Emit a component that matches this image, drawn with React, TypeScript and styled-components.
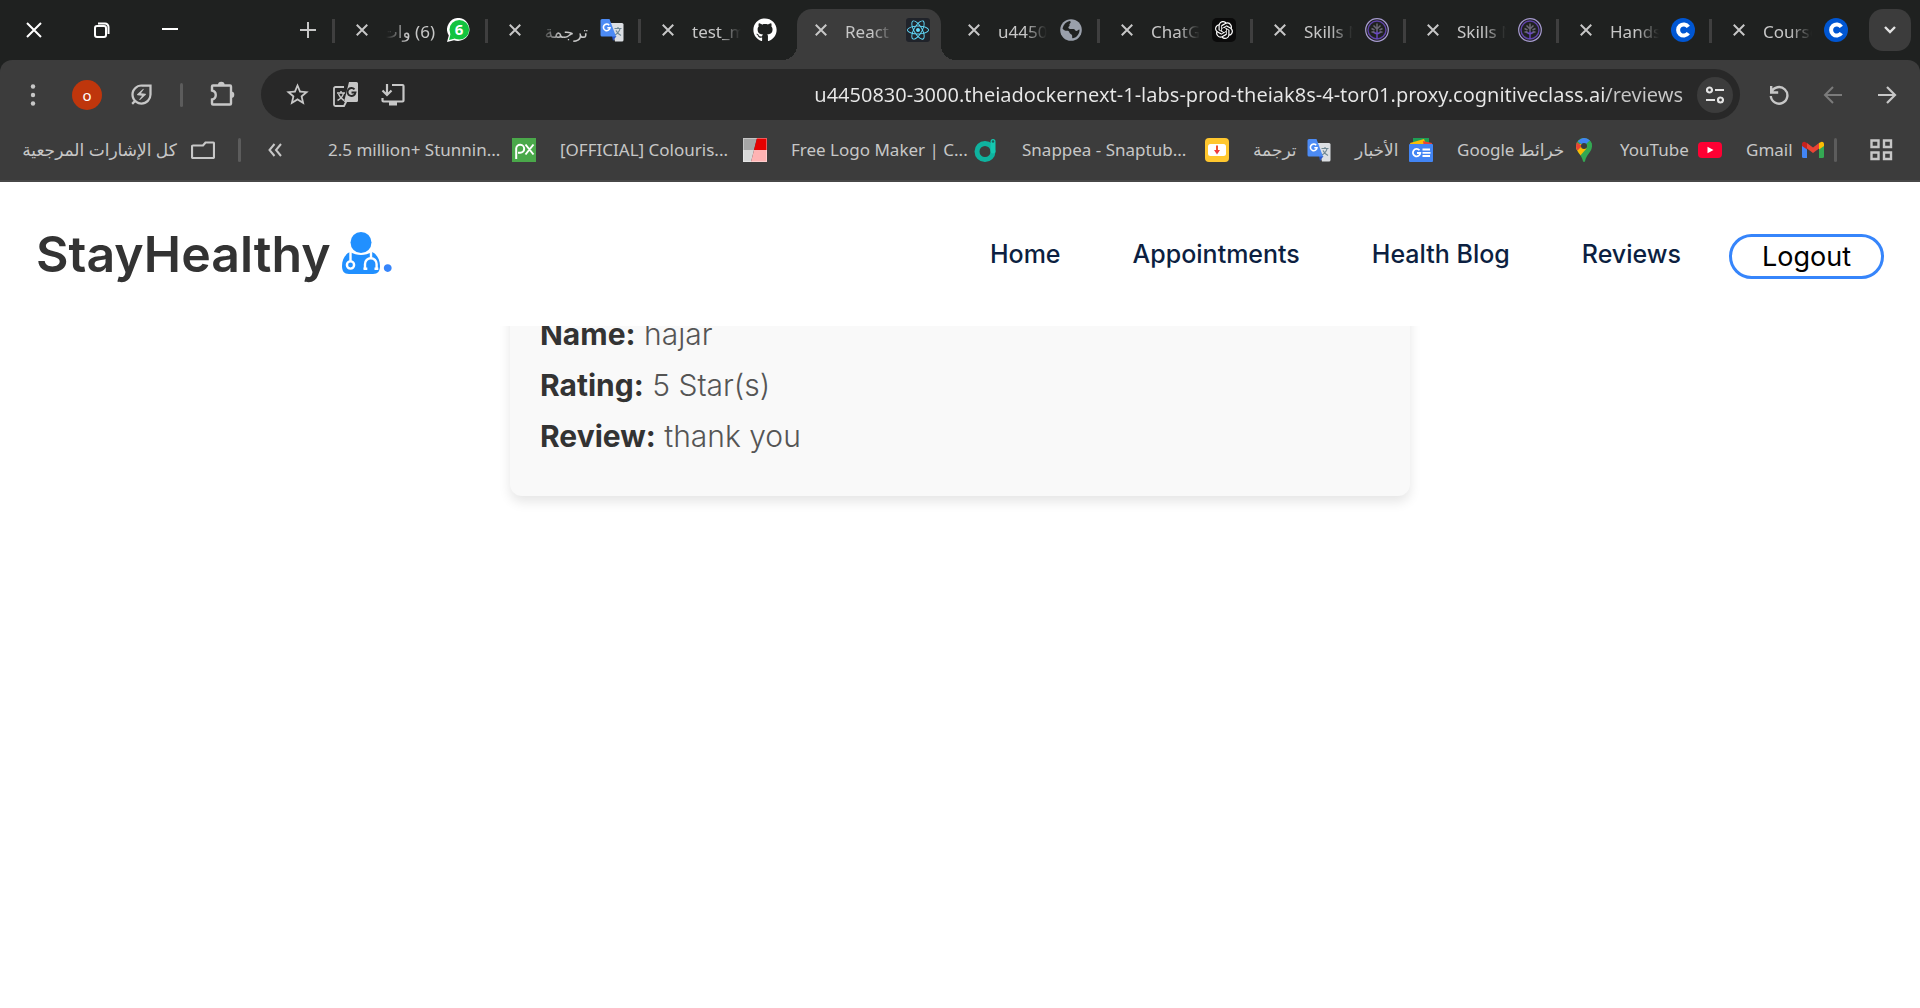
import React from 'react';
import styled, { createGlobalStyle, css } from 'styled-components';
import { FaGithub, FaReact } from 'react-icons/fa';
import { SiOpenai } from 'react-icons/si';
import { MdStarBorder, MdOutlineEnergySavingsLeaf } from 'react-icons/md';

const uiFont = '"Noto Sans", "DejaVu Sans", sans-serif';
const pageFont = 'Inter, "Open Sans", sans-serif';

const GlobalStyle = createGlobalStyle`
  * { box-sizing: border-box; }
  html, body { margin: 0; background: #fff; }
  body { font-family: ${pageFont}; }
  button { border: 0; background: none; padding: 0; color: inherit; font: inherit; cursor: pointer; }
  svg { display: block; flex: none; }
`;

/* ---------- browser frame ---------- */

const Chrome = styled.header`
  background: #1f2120;
  color: #c7c7c7;
  font-family: ${uiFont};
`;

const TabStrip = styled.div`
  display: flex;
  align-items: center;
  height: 60px;
  padding-right: 9px;
`;

const WindowButton = styled.button`
  display: grid;
  place-items: center;
  width: 68px;
  height: 60px;
  color: #fff;
`;

const NewTabButton = styled.button`
  display: grid;
  place-items: center;
  width: 48px;
  height: 48px;
  margin-left: 80px;
`;

const Tabs = styled.div`
  display: flex;
  flex: 1;
  min-width: 0;
  height: 60px;
`;

const Tab = styled.div<{ $active?: boolean; $divided?: boolean }>`
  position: relative;
  display: flex;
  align-items: center;
  flex: 1;
  min-width: 0;
  padding: 0 14px 0 21px;
  border-left: 3px solid transparent;
  border-image: ${p => (p.$divided ? 'linear-gradient(transparent 19px, #3f3f3f 19px, #3f3f3f 43px, transparent 43px) 1' : 'none')};
  ${p =>
    p.$active &&
    css`
      isolation: isolate;
      &::before {
        content: '';
        position: absolute;
        z-index: -1;
        inset: 9px 3px 0 3px;
        border-radius: 15px 15px 0 0;
        background: #3c3c3c;
      }
      &::after {
        content: '';
        position: absolute;
        z-index: -1;
        inset: auto -12px 0 -12px;
        height: 15px;
        background:
          radial-gradient(circle at 0 0, transparent 15px, #3c3c3c 15px) left / 15px 15px no-repeat,
          radial-gradient(circle at 100% 0, transparent 15px, #3c3c3c 15px) right / 15px 15px no-repeat;
      }
    `}
`;

const TabClose = styled.button`
  display: grid;
  place-items: center;
  width: 12px;
  height: 24px;
`;

const TabTitle = styled.span<{ $rtl?: boolean }>`
  flex: 1;
  min-width: 0;
  margin: 4px 12px 0 18px;
  overflow: hidden;
  white-space: nowrap;
  font-size: 17px;
  line-height: 26px;
  direction: ${p => (p.$rtl ? 'rtl' : 'ltr')};
  mask-image: linear-gradient(${p => (p.$rtl ? 'to left' : 'to right')}, #000 55%, transparent);
`;

const TabSearch = styled.button`
  display: grid;
  place-items: center;
  width: 42px;
  height: 42px;
  margin-left: 7px;
  border-radius: 14px;
  background: #3c3c3c;
  color: #e3e3e3;
`;

const Toolbar = styled.div`
  display: flex;
  align-items: center;
  padding: 9px 6px 0 6px;
  border-radius: 12px 12px 0 0;
  background: #3c3c3c;
`;

const ToolButton = styled.button<{ $dim?: boolean }>`
  display: grid;
  place-items: center;
  width: 54px;
  height: 51px;
  color: ${p => (p.$dim ? '#7b7b7b' : '#c7c7c7')};
`;

const Avatar = styled.span`
  display: grid;
  place-items: center;
  width: 30px;
  height: 30px;
  border-radius: 50%;
  background: #bf360c;
  color: #fff;
  font-size: 15px;
  line-height: 30px;
`;

const Divider = styled.span<{ $gap?: number }>`
  flex: none;
  width: 3px;
  height: 24px;
  margin: 0 ${p => p.$gap ?? 0}px;
  border-radius: 2px;
  background: #5c5c5c;
`;

const AddressBar = styled.div`
  display: flex;
  align-items: center;
  flex: 1;
  height: 51px;
  margin: 0 12px;
  padding: 0 7px 0 12px;
  border-radius: 26px;
  background: #282828;
`;

const AddressButton = styled.button`
  display: grid;
  place-items: center;
  width: 48px;
  height: 48px;
`;

const AddressInput = styled.input`
  flex: 1;
  min-width: 0;
  padding: 0;
  border: 0;
  outline: 0;
  text-align: right;
  font-family: ${uiFont};
  font-size: 20px;
  line-height: 30px;
  background: linear-gradient(to left, #c7c7c7 76px, #e8e8e8 76px);
  background-clip: text;
  -webkit-background-clip: text;
  -webkit-text-fill-color: transparent;
`;

const SiteInfo = styled.button`
  display: grid;
  place-items: center;
  width: 36px;
  height: 36px;
  margin-left: 14px;
  border-radius: 50%;
  background: #3c3c3c;
  color: #e3e3e3;
`;

const BookmarksBar = styled.nav`
  display: flex;
  align-items: center;
  height: 62px;
  padding: 0 27px 0 22px;
  border-bottom: 2px solid #474747;
  background: #3c3c3c;
  font-size: 17px;
  line-height: 26px;
`;

const AllBookmarks = styled.button`
  display: flex;
  align-items: center;
  gap: 14px;
  margin-right: 23px;
`;

const Overflow = styled.button`
  margin-left: 27px;
`;

const BookmarkList = styled.div`
  display: flex;
  align-items: center;
  justify-content: flex-end;
  flex: 1;
  gap: 24px;
  margin-right: 9px;
`;

const Bookmark = styled.a`
  display: flex;
  align-items: center;
  gap: 10px;
  color: inherit;
  text-decoration: none;
  white-space: nowrap;
`;

const BookmarkLabel = styled.span<{ $width: number }>`
  width: ${p => p.$width}px;
`;

const Apps = styled.button`
  margin-left: 33px;
`;

/* ---------- page ---------- */

const SiteNav = styled.nav`
  position: relative;
  z-index: 1;
  display: flex;
  align-items: center;
  justify-content: space-between;
  height: 144px;
  padding: 0 36px;
  background: #fff;
`;

const Brand = styled.a`
  display: flex;
  align-items: center;
  color: #333;
  font-size: 50px;
  font-weight: 600;
  line-height: 72px;
  text-decoration: none;
`;

const BrandDot = styled.span`
  color: #3685fb;
`;

const Links = styled.div`
  display: flex;
  align-items: center;
  gap: 72px;
  padding-top: 5px;
`;

const NavLink = styled.a`
  padding-bottom: 5px;
  color: #0c1f41;
  font-size: 25px;
  font-weight: 500;
  line-height: 36px;
  text-decoration: none;
`;

const Logout = styled.button`
  height: 45px;
  margin-left: -24px;
  padding: 0 30px;
  border: 3px solid #3685fb;
  border-radius: 23px;
  color: #000;
  font-family: ${pageFont};
  font-size: 27px;
  line-height: 39px;
`;

const ScrollArea = styled.main`
  overflow: hidden;
  padding-bottom: 60px;
`;

const ReviewCard = styled.article`
  max-width: 900px;
  margin: -40px auto 0;
  padding: 30px 30px 27px;
  border-radius: 12px;
  background: #f9f9f9;
  box-shadow: 0 6px 12px rgba(0, 0, 0, 0.1);
`;

const ReviewLine = styled.p`
  margin: 0 0 15px;
  color: #555;
  font-size: 30px;
  font-weight: 300;
  line-height: 36px;

  strong {
    color: #333;
    font-weight: 700;
  }
`;

/* ---------- drawings ---------- */

const DoctorIcon = styled(({ className }: { className?: string }) => (
  <svg className={className} width="38" height="42" viewBox="0 0 38 42" fill="none">
    <path d="M8 20c7 4 15 4 22 0 5 2 8 8 8 14 0 5-2 8-7 8H7c-5 0-7-3-7-8 0-6 3-12 8-14z" fill="currentColor" />
    <g stroke="#fff" strokeWidth="2.400">
      <path d="M8.500 18v12M29 18v8" />
      <circle cx="8.500" cy="33" r="3.600" />
      <path d="M23 37v-5a5.800 5.800 0 0 1 11.600 0v5" />
    </g>
    <path d="M21.500 35.500h3.800v2.500h-3.800zM32.500 35.500h3.800v2.500h-3.800z" fill="#fff" />
    <circle cx="19" cy="10.500" r="11.800" fill="#fff" />
    <circle cx="19" cy="10.500" r="10.500" fill="currentColor" />
  </svg>
))`
  margin: 0 0 3px 11px;
  color: #2190ff;
`;

const TranslateLogo = () => (
  <svg width="24" height="24" viewBox="0 0 24 24">
    <path d="M10 5h12a1.500 1.500 0 0 1 1.500 1.500V22a1.500 1.500 0 0 1-1.500 1.500h-7z" fill="#dcdfe3" />
    <path d="M14.500 10.500h7M18 9v1.500M20 10.500c-.5 3-2.500 5-5 6.500M16 12.500c1 2 3 4 5 5" stroke="#6f8894" strokeWidth="1.200" fill="none" />
    <path d="M12 18h4.500L13 23z" fill="#2a56c6" />
    <path d="M2 1H9.500l6.500 17.500H2A1.500 1.500 0 0 1 .5 17V2.500A1.500 1.500 0 0 1 2 1z" fill="#4c8bf5" />
    <path d="M9.200 7.200A3.300 3.300 0 1 0 10 9.700H7.300" stroke="#fff" strokeWidth="1.600" fill="none" />
  </svg>
);

const WhatsAppLogo = () => (
  <svg width="24" height="24" viewBox="0 0 24 24">
    <path d="M12.500 0A11.500 11.500 0 1 1 7 22.200L0 24l1.800-6.500A11.500 11.500 0 0 1 12.500 0z" fill="#fff" />
    <circle cx="12.300" cy="11.700" r="9.800" fill="#12c33f" />
    <path d="M2 22l1.500-6 4.500 4.600z" fill="#12c33f" />
    <text x="12" y="17" textAnchor="middle" fontFamily="Open Sans, sans-serif" fontWeight="700" fontSize="15" fill="#fff">6</text>
  </svg>
);

const ReactLogo = () => (
  <svg width="24" height="24" viewBox="0 0 24 24">
    <rect width="24" height="24" rx="3" fill="#20232a" />
    <FaReact x="1" y="1" size={22} color="#61dafb" />
  </svg>
);

const GlobeLogo = () => (
  <svg width="24" height="24" viewBox="0 0 24 24">
    <circle cx="12" cy="12" r="10.800" fill="#9aa0ab" />
    <path d="M3.500 10.500C4.500 6.500 7 3.800 10.500 3c1.500 0 1.500 1.500.5 2.500-1.500 1 .5 2-1 3-1.500.8 0 2.500 1.500 2.500h3c1.500 0 1.500 2 3 2 1.200 0 1.500-1.500 3-1.500.3 4-2.500 8-6.500 8.800-1.500 0-.5-2-1-3-.5-1.500-2-1-2.500-2.500-.3-1.500-1-2-2.500-2-2 0-3.500-.8-4.500-2.300z" fill="#1f2120" />
    <path d="M14.500 3.500c3 1 4.800 3 5.500 5.500-1.500.5-2-.5-3-1.500s-3-1.500-2.500-4z" fill="#9aa0ab" />
  </svg>
);

const ChatLogo = () => (
  <svg width="24" height="24" viewBox="0 0 24 24">
    <rect width="24" height="24" rx="5" fill="#0b0b0b" />
    <SiOpenai x="3" y="3" size={18} color="#fff" />
  </svg>
);

const SkillsLogo = () => (
  <svg width="24" height="24" viewBox="0 0 24 24" fill="none">
    <circle cx="12" cy="12" r="11.300" stroke="#a79bd0" strokeWidth="1.200" />
    <circle cx="12" cy="12" r="9" stroke="#5f43a8" strokeWidth="1.400" />
    <path d="M12 21v-8M12 16l4-2M12 16l-4-2" stroke="#6a4bc0" strokeWidth="1.400" />
    <path d="M12 13V5.500M12 11l3.500-3.500M12 11L8.500 7.500M6.500 10.500l3 1.500M17.500 10.500l-3 1.500M6.500 14h3M14.500 14h3" stroke="#6b6776" strokeWidth="1.500" />
  </svg>
);

const CourseraLogo = () => (
  <svg width="24" height="24" viewBox="0 0 24 24">
    <circle cx="12" cy="12" r="12" fill="#0056d2" />
    <path d="M17.300 8.800a5.600 5.600 0 1 0 0 6.400" stroke="#fff" strokeWidth="4" fill="none" />
  </svg>
);

const PxLogo = () => (
  <svg width="24" height="24" viewBox="0 0 24 24" fill="none" stroke="#fff" strokeWidth="2">
    <rect width="24" height="24" fill="#4aa84a" stroke="none" />
    <path d="M4.200 21V10.500a4 4 0 1 1 4 4.300H6M13.500 6.500l8 10M21.500 6.500l-8 10" />
  </svg>
);

const ColourLogo = () => (
  <svg width="24" height="24" viewBox="0 0 24 24">
    <path d="M0 0h14l-3 12H0z" fill="#a6a6a6" />
    <path d="M14 0h10v12H11z" fill="#e60000" />
    <path d="M0 12h11L8 24H0z" fill="#d9d9d9" />
    <path d="M11 12h13v12H8z" fill="#ffb3b3" />
    <rect x=".5" y=".5" width="23" height="23" fill="none" stroke="#fff" strokeOpacity=".35" />
  </svg>
);

const LogoMakerLogo = () => (
  <svg width="24" height="24" viewBox="0 0 24 24" fill="none">
    <circle cx="11" cy="13.500" r="8" stroke="#0fb39f" strokeWidth="5" />
    <path d="M19 13V3.500" stroke="#14c8b0" strokeWidth="5" strokeLinecap="round" />
    <circle cx="19" cy="3.500" r="1.200" fill="#14655b" />
  </svg>
);

const SnappeaLogo = () => (
  <svg width="24" height="24" viewBox="0 0 24 24">
    <rect width="24" height="24" rx="4" fill="#ffc72e" />
    <rect x="3" y="6" width="18" height="12" rx="2.500" fill="#fff" />
    <path d="M12 7.500v5" stroke="#f05030" strokeWidth="2" />
    <path d="M9 12h6l-3 4.500z" fill="#f03c3c" />
  </svg>
);

const NewsLogo = () => (
  <svg width="24" height="24" viewBox="0 0 24 24">
    <path d="M4 0h16v8H4z" fill="#1e9e54" />
    <path d="M1 5l14-4 3 8H2z" fill="#fbbc04" />
    <path d="M14 3l9 2-1 5h-7z" fill="#ea4335" />
    <rect y="6" width="24" height="18" rx="1" fill="#4285f4" />
    <path d="M10.500 12.300A3.700 3.700 0 1 0 11.300 15H8M13.500 11.500H21M13.500 14.800h8M13.500 18H21" stroke="#fff" strokeWidth="1.800" fill="none" />
  </svg>
);

const MapsLogo = () => (
  <svg width="24" height="24" viewBox="0 0 24 24">
    <defs>
      <clipPath id="pin">
        <path d="M12 0a8 8 0 0 1 8 8c0 6-5.500 8-7 15.200-.2 1-1.800 1-2 0C9.500 16 4 14 4 8a8 8 0 0 1 8-8z" />
      </clipPath>
    </defs>
    <g clipPath="url(#pin)">
      <path d="M0 0h24v24H0z" fill="#34a853" />
      <path d="M0 8l9-2 6 4-8 9H0z" fill="#fbbc04" />
      <path d="M2 2l8 6-5 5-3-3z" fill="#ea4335" />
      <path d="M5.500 3l6.500 5 6.500-6L12-1z" fill="#4285f4" />
      <path d="M12 8l6.500-6L22 8l-7 3z" fill="#34a853" />
    </g>
    <circle cx="12" cy="8" r="3" fill="#3c3c3c" />
  </svg>
);

const YouTubeLogo = () => (
  <svg width="24" height="24" viewBox="0 0 24 24">
    <rect y="4" width="24" height="16" rx="4" fill="#ff0033" />
    <path d="M9.500 8.800v6.400l6-3.200z" fill="#fff" />
  </svg>
);

const GmailLogo = () => (
  <svg width="24" height="24" viewBox="0 0 24 24">
    <path d="M1 6.500l5 3.700V20H2.500A1.500 1.500 0 0 1 1 18.500z" fill="#4285f4" />
    <path d="M18 10.200l5-3.700v12a1.500 1.500 0 0 1-1.500 1.500H18z" fill="#34a853" />
    <path d="M6 5l6 4.500L18 5v5.500L12 15l-6-4.500z" fill="#ea4335" />
    <path d="M18 5l1.500-.8A2.200 2.200 0 0 1 23 6v2l-5 3.500z" fill="#fbbc04" />
    <path d="M6 5l-1.500-.8A2.200 2.200 0 0 0 1 6v2l5 3.500z" fill="#c5221f" />
  </svg>
);

const Cross = ({ size, stroke }: { size: number; stroke: number }) => (
  <svg width={size} height={size} viewBox="0 0 16 16" fill="none" stroke="currentColor" strokeWidth={stroke}>
    <path d="M1 1l14 14M15 1L1 15" />
  </svg>
);

const Stroke = ({ size = 24, width = 2, children }: { size?: number; width?: number; children: React.ReactNode }) => (
  <svg width={size} height={size} viewBox="0 0 24 24" fill="none" stroke="currentColor" strokeWidth={width}>
    {children}
  </svg>
);

/* ---------- data ---------- */

const tabs = [
  { title: '(6) وات', rtl: true, icon: <WhatsAppLogo />, divided: true },
  { title: 'ترجمة', rtl: true, icon: <TranslateLogo />, divided: true },
  { title: 'test_m', icon: <FaGithub size={24} color="#fff" />, divided: true },
  { title: 'React', icon: <ReactLogo />, active: true },
  { title: 'u4450', icon: <GlobeLogo /> },
  { title: 'ChatG', icon: <ChatLogo />, divided: true },
  { title: 'Skills N', icon: <SkillsLogo />, divided: true },
  { title: 'Skills N', icon: <SkillsLogo />, divided: true },
  { title: 'Hands', icon: <CourseraLogo />, divided: true },
  { title: 'Course', icon: <CourseraLogo />, divided: true },
];

const bookmarks = [
  { label: '2.5 million+ Stunnin...', width: 174, icon: <PxLogo /> },
  { label: '[OFFICIAL] Colouris...', width: 173, icon: <ColourLogo /> },
  { label: 'Free Logo Maker | C...', width: 173, icon: <LogoMakerLogo /> },
  { label: 'Snappea - Snaptub...', width: 173, icon: <SnappeaLogo /> },
  { label: 'ترجمة', width: 44, icon: <TranslateLogo /> },
  { label: 'الأخبار', width: 44, icon: <NewsLogo /> },
  { label: 'Google خرائط', width: 105, icon: <MapsLogo /> },
  { label: 'YouTube', width: 68, icon: <YouTubeLogo /> },
  { label: 'Gmail', width: 45, icon: <GmailLogo /> },
];

const review = [
  ['Name:', 'hajar'],
  ['Rating:', '5 Star(s)'],
  ['Review:', 'thank you'],
];

export default function App() {
  return (
    <>
      <GlobalStyle />
      <Chrome>
        <TabStrip>
          <WindowButton aria-label="Close window"><Cross size={16} stroke={2} /></WindowButton>
          <WindowButton aria-label="Restore window">
            <svg width="16" height="16" viewBox="0 0 16 16" fill="none" stroke="currentColor" strokeWidth="2">
              <rect x="1" y="4" width="11" height="11" rx="2" />
              <path d="M4 1.500h7A3.500 3.500 0 0 1 14.500 5v7" />
            </svg>
          </WindowButton>
          <WindowButton aria-label="Minimise window">
            <svg width="16" height="16" viewBox="0 0 16 16"><path d="M0 6h16v2H0z" fill="currentColor" /></svg>
          </WindowButton>
          <NewTabButton aria-label="New tab">
            <svg width="16" height="16" viewBox="0 0 16 16" stroke="currentColor" strokeWidth="2"><path d="M8 0v16M0 8h16" /></svg>
          </NewTabButton>
          <Tabs role="tablist">
            {tabs.map((tab, i) => (
              <Tab key={i} role="tab" aria-selected={!!tab.active} $active={tab.active} $divided={tab.divided}>
                <TabClose aria-label="Close tab"><Cross size={12} stroke={2.6} /></TabClose>
                <TabTitle $rtl={tab.rtl}>{tab.title}</TabTitle>
                {tab.icon}
              </Tab>
            ))}
          </Tabs>
          <TabSearch aria-label="Search tabs">
            <svg width="12" height="12" viewBox="0 0 12 12" fill="none" stroke="currentColor" strokeWidth="2.400"><path d="M1 3l5 5 5-5" /></svg>
          </TabSearch>
        </TabStrip>

        <Toolbar>
          <ToolButton aria-label="Menu">
            <svg width="24" height="24" viewBox="0 0 24 24" fill="currentColor">
              <circle cx="12" cy="3.500" r="2.200" /><circle cx="12" cy="12" r="2.200" /><circle cx="12" cy="20.500" r="2.200" />
            </svg>
          </ToolButton>
          <ToolButton aria-label="Profile"><Avatar>o</Avatar></ToolButton>
          <ToolButton aria-label="Energy saver"><MdOutlineEnergySavingsLeaf size={27} /></ToolButton>
          <Divider $gap={12} />
          <ToolButton aria-label="Extensions">
            <svg width="27" height="27" viewBox="0 0 27 27" fill="none" stroke="currentColor" strokeWidth="2.400">
              <path d="M4 4.500h17a1 1 0 0 1 1 1v17a1 1 0 0 1-1 1H4a1 1 0 0 1-1-1v-4c5-1 5-8 0-9v-4a1 1 0 0 1 1-1z" />
              <path d="M9 4a3.300 3.300 0 0 1 6.600 0zM22 10.500a3.300 3.300 0 0 1 0 6.600z" fill="currentColor" stroke="none" />
            </svg>
          </ToolButton>
          <AddressBar>
            <AddressButton aria-label="Bookmark this page"><MdStarBorder size={27} /></AddressButton>
            <AddressButton aria-label="Translate this page">
              <svg width="25" height="25" viewBox="0 0 25 25" fill="none" stroke="currentColor">
                <path d="M11 5H2.500A1.500 1.500 0 0 0 1 6.500v16A1.500 1.500 0 0 0 2.500 24H11l2.500-5" strokeWidth="1.800" />
                <path d="M4 11h8M8 9v2M10.500 11c-.5 3-3 6-6 7.500M5.500 12c1 2.500 3 5 5.500 6.500" strokeWidth="1.500" />
                <path d="M16 0h7.500A1.500 1.500 0 0 1 25 1.500v17a1.500 1.500 0 0 1-1.500 1.500H11z" fill="currentColor" stroke="none" />
                <path d="M21.500 7.300A4 4 0 1 0 22.500 10.500H18.500" stroke="#282828" strokeWidth="1.900" />
              </svg>
            </AddressButton>
            <AddressButton aria-label="Install app">
              <svg width="24" height="24" viewBox="0 0 24 24" fill="none" stroke="currentColor" strokeWidth="2.200">
                <path d="M11 2h10.500a1 1 0 0 1 1 1v14.500a1 1 0 0 1-1 1h-19a1 1 0 0 1-1-1V15M6 1v10.500M1.500 7.500L6 12l4.500-4.500" />
                <path d="M8 19h8v3.500H8z" fill="currentColor" stroke="none" />
              </svg>
            </AddressButton>
            <AddressInput
              aria-label="Address"
              defaultValue="u4450830-3000.theiadockernext-1-labs-prod-theiak8s-4-tor01.proxy.cognitiveclass.ai/reviews"
            />
            <SiteInfo aria-label="Site information">
              <svg width="18" height="18" viewBox="0 0 18 18" fill="none" stroke="currentColor" strokeWidth="2.200">
                <circle cx="3.500" cy="4" r="2.500" /><path d="M9 4h9M0 14h9" /><circle cx="14.500" cy="14" r="2.500" />
              </svg>
            </SiteInfo>
          </AddressBar>
          <ToolButton aria-label="Reload">
            <Stroke width={2.4}><path d="M4.200 3v6.500h7M4.500 9A8.300 8.300 0 1 1 3.800 13" /></Stroke>
          </ToolButton>
          <ToolButton aria-label="Back" $dim><Stroke><path d="M21 12H4M12 4l-8 8 8 8" /></Stroke></ToolButton>
          <ToolButton aria-label="Forward"><Stroke width={2.2}><path d="M3 12h17M12 4l8 8-8 8" /></Stroke></ToolButton>
        </Toolbar>

        <BookmarksBar aria-label="Bookmarks">
          <AllBookmarks>
            <BookmarkLabel $width={155} dir="rtl">كل الإشارات المرجعية</BookmarkLabel>
            <svg width="24" height="18" viewBox="0 0 24 18" fill="none" stroke="currentColor" strokeWidth="2.200">
              <path d="M2 4.500h10l2.500-3H22a1 1 0 0 1 1 1v13.500a1 1 0 0 1-1 1H2a1 1 0 0 1-1-1V5.500a1 1 0 0 1 1-1z" />
            </svg>
          </AllBookmarks>
          <Divider />
          <Overflow aria-label="More bookmarks">
            <svg width="14" height="14" viewBox="0 0 14 14" fill="none" stroke="currentColor" strokeWidth="2"><path d="M6.500 1l-5 6 5 6M13 1L8 7l5 6" /></svg>
          </Overflow>
          <BookmarkList>
            {bookmarks.map(b => (
              <Bookmark key={b.label} href="#">
                <BookmarkLabel $width={b.width}>{b.label}</BookmarkLabel>
                {b.icon}
              </Bookmark>
            ))}
          </BookmarkList>
          <Divider />
          <Apps aria-label="Apps">
            <svg width="23" height="22" viewBox="0 0 23 22" fill="none" stroke="currentColor" strokeWidth="2.400">
              <path d="M1.500 1.500h7v6.500h-7zM14 1.500h7v6.500h-7zM1.500 13.500h7V20h-7zM14 13.500h7V20h-7z" />
            </svg>
          </Apps>
        </BookmarksBar>
      </Chrome>

      <SiteNav>
        <Brand href="#">
          StayHealthy
          <DoctorIcon />
          <BrandDot>.</BrandDot>
        </Brand>
        <Links>
          <NavLink href="#">Home</NavLink>
          <NavLink href="#">Appointments</NavLink>
          <NavLink href="#">Health Blog</NavLink>
          <NavLink href="#">Reviews</NavLink>
          <Logout>Logout</Logout>
        </Links>
      </SiteNav>

      <ScrollArea>
        <ReviewCard>
          {review.map(([label, value]) => (
            <ReviewLine key={label}>
              <strong>{label}</strong> {value}
            </ReviewLine>
          ))}
        </ReviewCard>
      </ScrollArea>
    </>
  );
}
